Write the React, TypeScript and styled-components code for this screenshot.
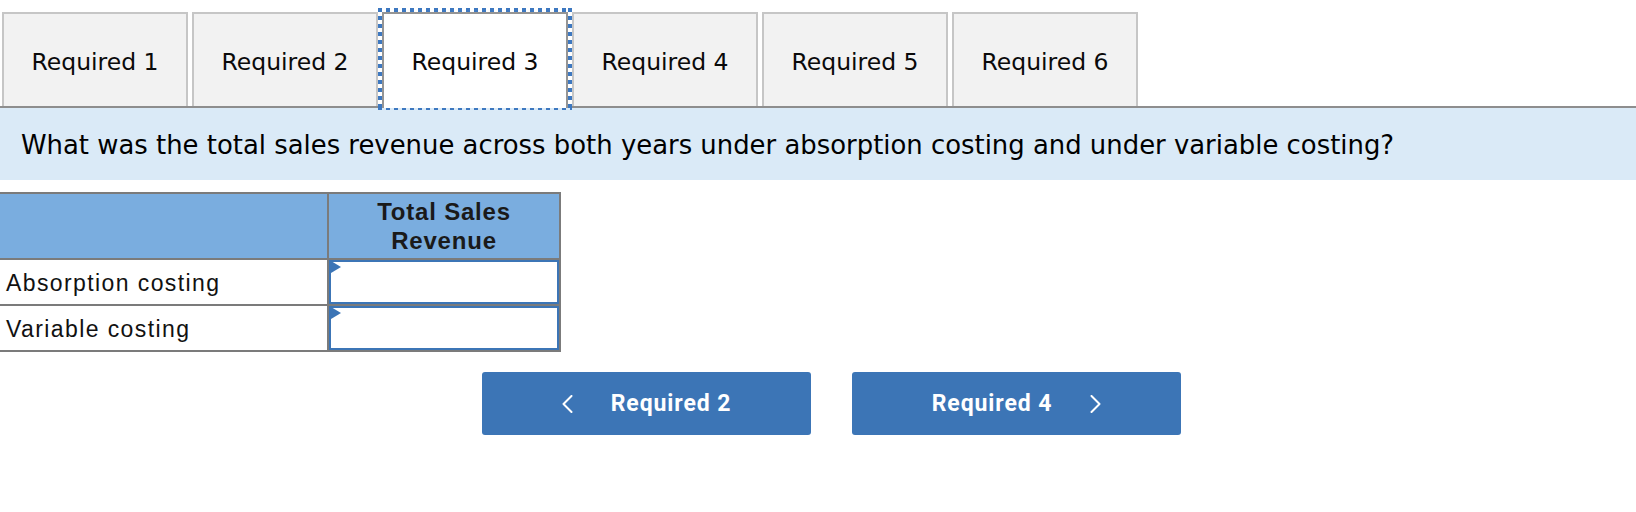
import React from 'react'
import styled, { createGlobalStyle } from 'styled-components'

const colors = {
  tabBorder: '#c6c6c6',
  tabBg: '#f2f2f2',
  activeBorder: '#959595',
  rule: '#8e8e8e',
  focus: '#3d78c0',
  band: '#daeaf7',
  head: '#7aaddf',
  grid: '#7b7b7b',
  blue: '#3c75b6'
}

const GlobalStyle = createGlobalStyle`
  body {
    margin: 0;
    background: #fff;
  }
`

const Page = styled.div`
  display: flex;
  flex-direction: column;
  width: 1636px;
`

const TabList = styled.div`
  display: flex;
  gap: 4px;
  padding: 12px 0 0 2px;
  border-bottom: 2px solid ${colors.rule};
`

const Tab = styled.button<{ $active?: boolean }>`
  position: relative;
  box-sizing: border-box;
  width: 186px;
  height: ${p => (p.$active ? '96px' : '94px')};
  margin-bottom: ${p => (p.$active ? '-2px' : '0')};
  padding: ${p => (p.$active ? '3px 0 2px' : '3px 0 0')};
  border: 2px solid ${p => (p.$active ? colors.activeBorder : colors.tabBorder)};
  border-bottom: none;
  background: ${p => (p.$active ? '#fff' : colors.tabBg)};
  font-family: 'DejaVu Sans', Verdana, sans-serif;
  font-size: 23.5px;
  color: #0a0a0a;
  cursor: pointer;

  &::after {
    content: '';
    display: ${p => (p.$active ? 'block' : 'none')};
    position: absolute;
    top: -6px;
    left: -6px;
    right: -6px;
    bottom: -2px;
    pointer-events: none;
    background:
      repeating-linear-gradient(90deg, ${colors.focus} 0 4px, transparent 4px 8px) top / 100% 4px no-repeat,
      repeating-linear-gradient(90deg, ${colors.focus} 0 4px, transparent 4px 8px) bottom / 100% 2px no-repeat,
      repeating-linear-gradient(180deg, ${colors.focus} 0 4px, transparent 4px 8px) left / 4px 100% no-repeat,
      repeating-linear-gradient(180deg, ${colors.focus} 0 4px, transparent 4px 8px) right / 4px 100% no-repeat;
  }
`

const Prompt = styled.div`
  display: flex;
  align-items: center;
  height: 72px;
  padding: 2px 0 0 21px;
  box-sizing: border-box;
  background: ${colors.band};
  font-family: 'DejaVu Sans', Verdana, sans-serif;
  font-size: 25.9px;
  color: #000;
`

const Sheet = styled.div`
  display: grid;
  grid-template-columns: 327px 230px;
  grid-template-rows: 64px 44px 44px;
  gap: 2px;
  width: fit-content;
  margin-top: 12px;
  border: 2px solid ${colors.grid};
  border-left: none;
  background: ${colors.grid};
  font-family: 'Liberation Sans', Arial, Helvetica, sans-serif;
  color: #111;
`

const HeadCell = styled.div`
  display: flex;
  align-items: center;
  justify-content: center;
  background: ${colors.head};
  font-size: 24px;
  font-weight: 700;
  line-height: 29px;
  letter-spacing: 0.8px;
  text-align: center;
  color: #1a1a1a;
`

const LabelCell = styled.div`
  display: flex;
  align-items: center;
  padding: 2px 0 0 6px;
  background: #fff;
  font-size: 23px;
  letter-spacing: 1.4px;
`

const InputCell = styled.div`
  position: relative;
  background: #fff;
`

const Field = styled.input`
  box-sizing: border-box;
  width: 100%;
  height: 100%;
  margin: 0;
  border: 2px solid ${colors.blue};
  outline: none;
  background: #fff;
`

const Marker = styled.span`
  position: absolute;
  top: 1px;
  left: 2px;
  width: 0;
  height: 0;
  border-left: 10px solid ${colors.blue};
  border-top: 6.5px solid transparent;
  border-bottom: 6.5px solid transparent;
  pointer-events: none;
`

const Nav = styled.div`
  display: flex;
  gap: 41px;
  margin-top: 20px;
  padding-left: 482px;
`

const NavButton = styled.button`
  display: flex;
  align-items: center;
  justify-content: center;
  gap: 38px;
  width: 329px;
  height: 63px;
  padding: 0;
  border: none;
  border-radius: 3px;
  background: ${colors.blue};
  color: #fff;
  font-family: Roboto, 'Liberation Sans', sans-serif;
  font-size: 23px;
  font-weight: 700;
  letter-spacing: 0.9px;
  cursor: pointer;
`

const Chevron = ({ dir }: { dir: 'left' | 'right' }) => (
  <svg width="11" height="18" viewBox="0 0 11 18" fill="none">
    <polyline
      points={dir === 'left' ? '9.5,1 1.5,9 9.5,17' : '1.5,1 9.5,9 1.5,17'}
      stroke="#fff"
      strokeWidth="2"
      strokeLinecap="round"
      strokeLinejoin="round"
    />
  </svg>
)

const tabs = ['Required 1', 'Required 2', 'Required 3', 'Required 4', 'Required 5', 'Required 6']
const rows = ['Absorption costing', 'Variable costing']

const App = () => {
  const [current, setCurrent] = React.useState<number>(2)

  return (
    <Page>
      <GlobalStyle />
      <TabList>
        {tabs.map((t, i) => (
          <Tab key={t} $active={i === current} onClick={() => setCurrent(i)}>
            {t}
          </Tab>
        ))}
      </TabList>
      <Prompt>
        What was the total sales revenue across both years under absorption costing and under variable costing?
      </Prompt>
      <Sheet>
        <HeadCell />
        <HeadCell>
          Total Sales
          <br />
          Revenue
        </HeadCell>
        {rows.map(r => (
          <React.Fragment key={r}>
            <LabelCell>{r}</LabelCell>
            <InputCell>
              <Field type="text" aria-label={r} />
              <Marker />
            </InputCell>
          </React.Fragment>
        ))}
      </Sheet>
      <Nav>
        <NavButton onClick={() => setCurrent(c => Math.max(0, c - 1))}>
          <Chevron dir="left" />
          <span>Required 2</span>
        </NavButton>
        <NavButton onClick={() => setCurrent(c => Math.min(tabs.length - 1, c + 1))}>
          <span>Required 4</span>
          <Chevron dir="right" />
        </NavButton>
      </Nav>
    </Page>
  )
}

export default App
